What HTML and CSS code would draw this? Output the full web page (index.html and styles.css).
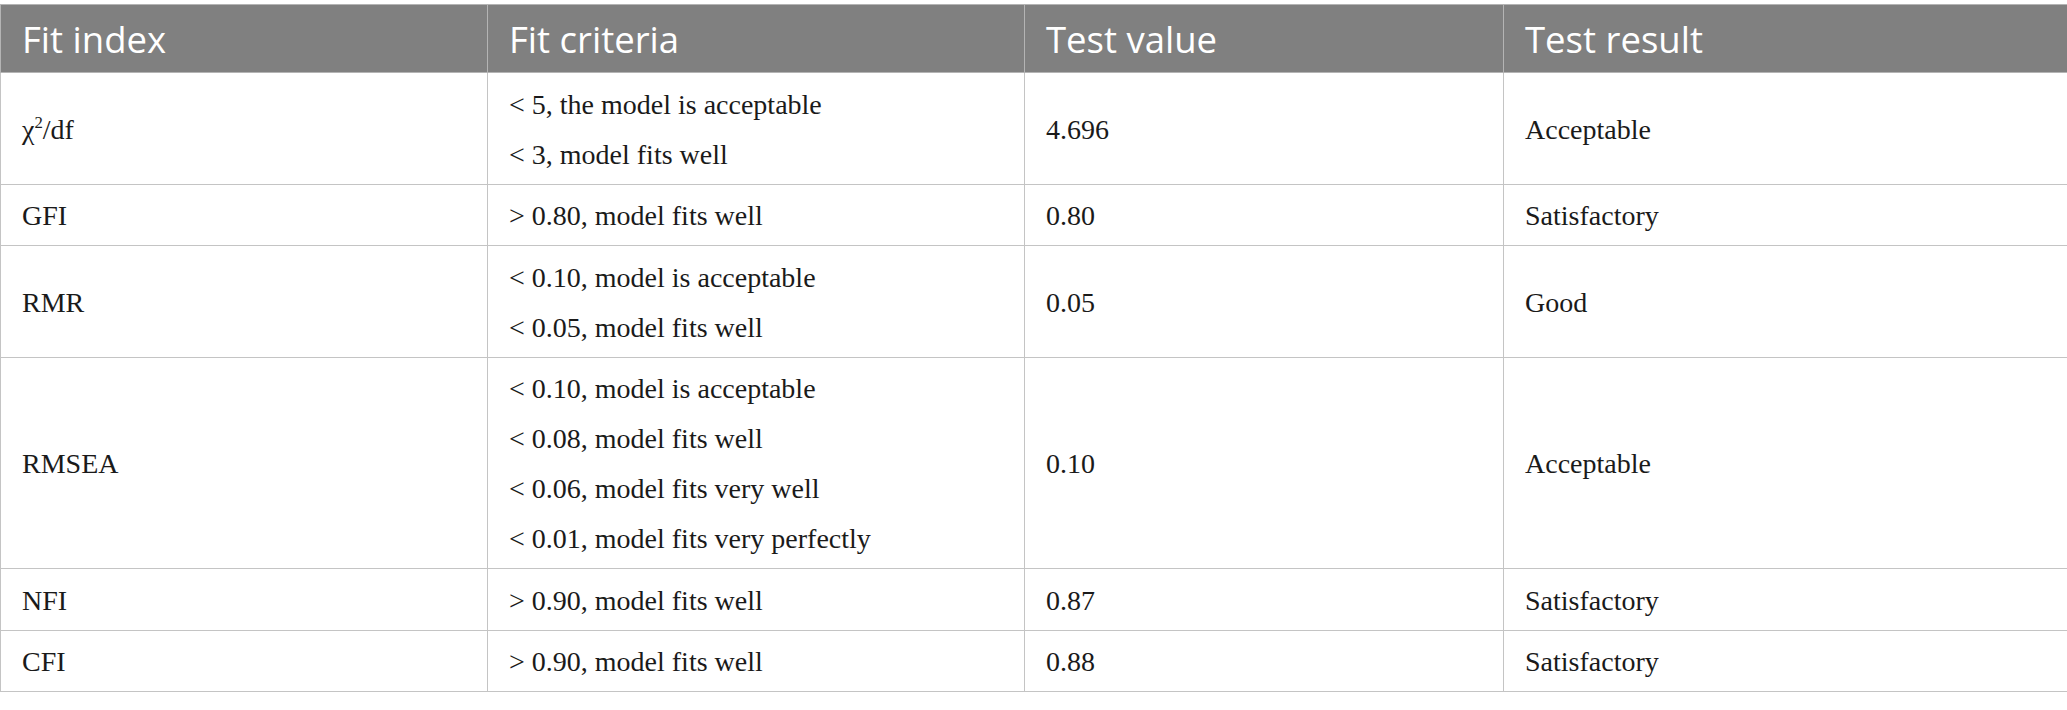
FILE: index.html
```html
<!DOCTYPE html>
<html lang="en">
<head>
<meta charset="utf-8">
<title>Fit indices</title>
<link rel="stylesheet" href="styles.css">
</head>
<body>
<table class="fit-table">
  <colgroup>
    <col class="c1">
    <col class="c2">
    <col class="c3">
    <col class="c4">
  </colgroup>
  <thead>
    <tr>
      <th>Fit index</th>
      <th>Fit criteria</th>
      <th>Test value</th>
      <th>Test result</th>
    </tr>
  </thead>
  <tbody>
    <tr>
      <td>χ<sup class="sup">2</sup>/df</td>
      <td><div>&lt; 5, the model is acceptable</div><div>&lt; 3, model fits well</div></td>
      <td>4.696</td>
      <td>Acceptable</td>
    </tr>
    <tr>
      <td>GFI</td>
      <td><div>&gt; 0.80, model fits well</div></td>
      <td>0.80</td>
      <td>Satisfactory</td>
    </tr>
    <tr>
      <td>RMR</td>
      <td><div>&lt; 0.10, model is acceptable</div><div>&lt; 0.05, model fits well</div></td>
      <td>0.05</td>
      <td>Good</td>
    </tr>
    <tr>
      <td>RMSEA</td>
      <td><div>&lt; 0.10, model is acceptable</div><div>&lt; 0.08, model fits well</div><div>&lt; 0.06, model fits very well</div><div>&lt; 0.01, model fits very perfectly</div></td>
      <td>0.10</td>
      <td>Acceptable</td>
    </tr>
    <tr>
      <td>NFI</td>
      <td><div>&gt; 0.90, model fits well</div></td>
      <td>0.87</td>
      <td>Satisfactory</td>
    </tr>
    <tr>
      <td>CFI</td>
      <td><div>&gt; 0.90, model fits well</div></td>
      <td>0.88</td>
      <td>Satisfactory</td>
    </tr>
  </tbody>
</table>
</body>
</html>
```
FILE: styles.css
```css
html, body {
  margin: 0;
  padding: 0;
  background: #ffffff;
}
body {
  padding-top: 4px;
}
.fit-table {
  width: 2067px;
  border-collapse: collapse;
  table-layout: fixed;
  font-family: "Liberation Serif", "Times New Roman", serif;
  font-size: 28px;
  color: #1a1a1a;
}
.c1 { width: 487px; }
.c2 { width: 537px; }
.c3 { width: 479px; }
.c4 { width: 564px; }
.fit-table th {
  background: #808080;
  color: #ffffff;
  font-family: "Open Sans", "Liberation Sans", sans-serif;
  font-weight: 400;
  font-size: 36.5px;
  text-align: left;
  line-height: 50px;
  padding: 9px 21px 8px;
  border: 1px solid #b4b4b4;
}
.fit-table td {
  text-align: left;
  vertical-align: middle;
  line-height: 50px;
  padding: 6.5px 21px 4px;
  border: 1px solid #c4c4c4;
}
.sup {
  font-size: 0.6em;
  line-height: 0;
  vertical-align: 0.65em;
}
```
